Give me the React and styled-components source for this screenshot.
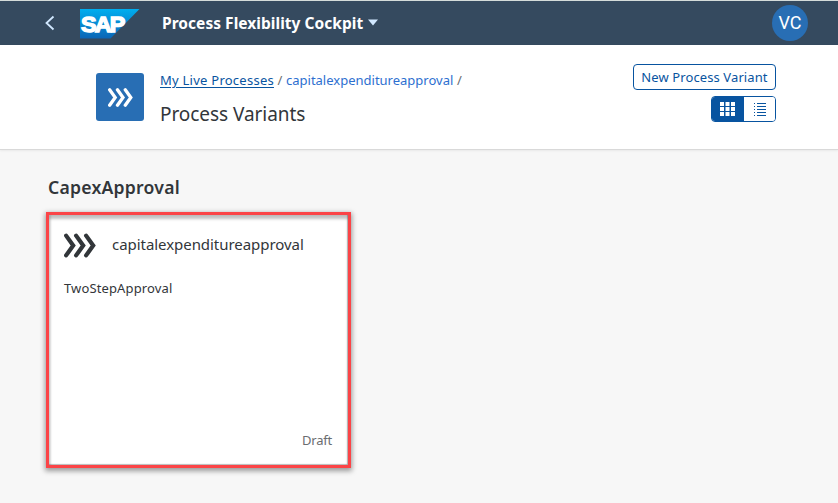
import React from 'react';
import styled, { createGlobalStyle } from 'styled-components';

const Global = createGlobalStyle`
  * { box-sizing: border-box; }
  body {
    margin: 0;
    background: #f7f7f7;
    color: #32363a;
    font-family: "Noto Sans", "Open Sans", sans-serif;
  }
  button { font-family: inherit; cursor: pointer; }
`;

const Page = styled.div`
  width: 838px;
  height: 503px;
  overflow: hidden;
  background: #f7f7f7;
`;

const ShellBar = styled.header`
  display: flex;
  align-items: center;
  height: 45px;
  padding: 0 30px 0 44px;
  background: #354a5f;
  border-top: 1px solid #d5dcda;
`;

const BackButton = styled.button`
  display: flex;
  width: 12px;
  height: 16px;
  margin-right: 24px;
  padding: 0;
  border: 0;
  background: none;
`;

const Logo = styled.svg`
  display: block;
  width: 60px;
  height: 30px;
  margin-top: 1px;
`;

const ShellTitle = styled.button`
  display: flex;
  align-items: center;
  gap: 5px;
  margin-left: 22px;
  padding: 0 0 1px;
  border: 0;
  background: none;
  color: #fff;
  font-size: 15.5px;
  font-weight: 700;
  letter-spacing: 0.04px;
  line-height: 24px;
  white-space: nowrap;
`;

const Avatar = styled.div`
  display: flex;
  align-items: center;
  justify-content: center;
  width: 36px;
  height: 36px;
  margin-left: auto;
  padding-bottom: 1px;
  border-radius: 50%;
  background: #286eb4;
  color: #fff;
  font-family: Roboto, "Noto Sans", sans-serif;
  font-size: 18px;
`;

const ObjectHeader = styled.section`
  display: flex;
  height: 105px;
  padding: 19px 62px 0 96px;
  background: #fff;
  border-bottom: 1px solid #d9d9d9;
  box-shadow: 0 1px 2px rgba(0, 0, 0, 0.06);
`;

const HeaderIcon = styled.div`
  display: flex;
  align-items: center;
  justify-content: center;
  width: 48px;
  height: 48px;
  margin: 9px 16px 0 0;
  border-radius: 3px;
  background: #286eb4;
`;

const HeaderText = styled.div`
  display: flex;
  flex-direction: column;
`;

const Breadcrumbs = styled.nav`
  display: flex;
  gap: 3.6px;
  margin-top: 6px;
  font-size: 13px;
  line-height: 20px;
  white-space: nowrap;
  color: #6a6d70;
`;

const Crumb = styled.a`
  color: ${(p) => (p.$linked ? '#0854a0' : '#2d6fd0')};
  letter-spacing: ${(p) => (p.$linked ? '0.25px' : '0')};
  text-decoration: ${(p) => (p.$linked ? 'underline' : 'none')};
  text-underline-offset: 2px;
  text-decoration-thickness: 1px;
`;

const PageTitle = styled.h1`
  margin: 10px 0 0;
  font-size: 19px;
  font-weight: 400;
  line-height: 28px;
  letter-spacing: -0.06px;
`;

const Actions = styled.div`
  display: flex;
  flex-direction: column;
  align-items: flex-end;
  gap: 6px;
  margin-left: auto;
`;

const OutlineButton = styled.button`
  width: 143px;
  height: 26px;
  padding: 0;
  border: 1px solid #0854a0;
  border-radius: 4px;
  background: #fff;
  color: #0854a0;
  font-size: 13px;
  letter-spacing: 0.1px;
  line-height: 24px;
  white-space: nowrap;
`;

const Segmented = styled.div`
  display: flex;
  width: 65px;
  height: 26px;
  overflow: hidden;
  border: 1px solid #0854a0;
  border-radius: 4px;
`;

const Segment = styled.button`
  display: flex;
  flex: ${(p) => (p.$active ? '0 0 32px' : '1')};
  align-items: center;
  justify-content: center;
  padding: ${(p) => (p.$active ? '0 2px 0 0' : '0')};
  border: 0;
  background: ${(p) => (p.$active ? '#0854a0' : '#fff')};
  color: ${(p) => (p.$active ? '#fff' : '#0854a0')};
`;

const Content = styled.main`
  padding: 23px 46px;
`;

const GroupTitle = styled.h2`
  margin: 0 0 0 2px;
  font-size: 17.6px;
  font-weight: 600;
  line-height: 28px;
  letter-spacing: 0.24px;
`;

const Card = styled.article`
  display: flex;
  flex-direction: column;
  width: 305px;
  height: 256px;
  margin-top: 11px;
  padding: 16px 16px 15px 15px;
  border: 3px solid #fb4447;
  background: #fff;
  box-shadow:
    0 2px 5px 1px rgba(0, 0, 0, 0.38),
    inset 0 4px 3px rgba(0, 0, 0, 0.24),
    inset 2px 0 2px rgba(0, 0, 0, 0.12),
    inset -1px -1px 1px rgba(0, 0, 0, 0.25);
`;

const CardHeader = styled.div`
  display: flex;
  align-items: center;
  gap: 16px;
  height: 28px;
`;

const CardTitle = styled.h3`
  margin: -2px 0 0;
  font-size: 15px;
  font-weight: 400;
  line-height: 24px;
  letter-spacing: -0.05px;
`;

const CardText = styled.p`
  margin: 19px 0 0;
  font-size: 13px;
  line-height: 20px;
  letter-spacing: 0.13px;
`;

const Status = styled.span`
  align-self: flex-end;
  margin-top: auto;
  color: #6a6d70;
  font-size: 13px;
  line-height: 20px;
  letter-spacing: -0.2px;
`;

function Chevrons({ width, height }) {
  return (
    <svg width={width} height={height} viewBox="0 0 32 24" fill="none" stroke="currentColor" strokeWidth="4.2" strokeLinecap="round" strokeLinejoin="miter">
      <path d="M2.1 2.1 9.2 12 2.1 21.9M12.1 2.1 19.2 12l-7.1 9.9M22.1 2.1 29.2 12l-7.1 9.9" />
    </svg>
  );
}

const HeaderChevrons = styled.span`
  display: flex;
  margin-top: 1px;
  color: #fff;
`;

function SapLogo() {
  return (
    <Logo viewBox="0 0 60 30" role="img" aria-label="SAP">
      <defs>
        <linearGradient id="sap" x1="0" y1="0" x2="0" y2="1">
          <stop offset="0" stopColor="#00aeef" />
          <stop offset="0.5" stopColor="#078ad3" />
          <stop offset="1" stopColor="#0b65b5" />
        </linearGradient>
      </defs>
      <path d="M0 0H59.5L30.5 29.5H0Z" fill="url(#sap)" />
      <text transform="translate(1 22.8) scale(1.06 1)" fill="#fff" stroke="#fff" strokeWidth="1.4" fontFamily="Liberation Sans, sans-serif" fontSize="22" fontWeight="700" letterSpacing="-1.7">SAP</text>
    </Logo>
  );
}

export default function App() {
  return (
    <Page>
      <Global />
      <ShellBar>
        <BackButton aria-label="Back">
          <svg width="12" height="16" viewBox="0 0 12 16" fill="none" stroke="#d1e8ff" strokeWidth="1.8">
            <path d="M9.5 1.5 2.5 8l7 6.5" />
          </svg>
        </BackButton>
        <SapLogo />
        <ShellTitle>
          Process Flexibility Cockpit
          <svg width="10" height="7" viewBox="0 0 10 7" fill="#d1e8ff"><path d="M0 .5h10L5 6.5Z" /></svg>
        </ShellTitle>
        <Avatar>VC</Avatar>
      </ShellBar>
      <ObjectHeader>
        <HeaderIcon>
          <HeaderChevrons><Chevrons width={25} height={19} /></HeaderChevrons>
        </HeaderIcon>
        <HeaderText>
          <Breadcrumbs>
            <Crumb $linked>My Live Processes</Crumb>
            <span>/</span>
            <Crumb>capitalexpenditureapproval</Crumb>
            <span>/</span>
          </Breadcrumbs>
          <PageTitle>Process Variants</PageTitle>
        </HeaderText>
        <Actions>
          <OutlineButton>New Process Variant</OutlineButton>
          <Segmented>
            <Segment $active aria-label="Grid view">
              <svg width="15" height="14" viewBox="0 0 15 14" fill="currentColor">
                <path d="M0 0h4v4H0zM5.5 0h4v4h-4zM11 0h4v4h-4zM0 5h4v4H0zM5.5 5h4v4h-4zM11 5h4v4h-4zM0 10h4v4H0zM5.5 10h4v4h-4zM11 10h4v4h-4z" />
              </svg>
            </Segment>
            <Segment aria-label="List view">
              <svg width="12" height="13" viewBox="0 0 12 13" fill="currentColor">
                <path d="M0 0h1v1H0zM3 0h9v1H3zM0 3h1v1H0zM3 3h9v1H3zM0 6h1v1H0zM3 6h9v1H3zM0 9h1v1H0zM3 9h9v1H3zM0 12h1v1H0zM3 12h9v1H3z" />
              </svg>
            </Segment>
          </Segmented>
        </Actions>
      </ObjectHeader>
      <Content>
        <GroupTitle>CapexApproval</GroupTitle>
        <Card>
          <CardHeader>
            <Chevrons width={32} height={25} />
            <CardTitle>capitalexpenditureapproval</CardTitle>
          </CardHeader>
          <CardText>TwoStepApproval</CardText>
          <Status>Draft</Status>
        </Card>
      </Content>
    </Page>
  );
}
